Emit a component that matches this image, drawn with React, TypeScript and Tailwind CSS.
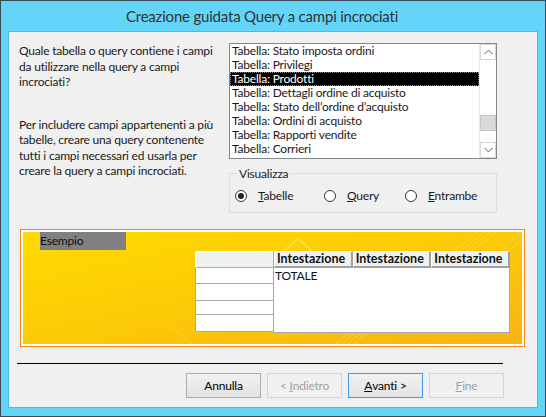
import React from "react";

const TABLES = [
  "Tabella: Stato imposta ordini",
  "Tabella: Privilegi",
  "Tabella: Prodotti",
  "Tabella: Dettagli ordine di acquisto",
  "Tabella: Stato dell\u2019ordine d\u2019acquisto",
  "Tabella: Ordini di acquisto",
  "Tabella: Rapporti vendite",
  "Tabella: Corrieri",
  "Tabella: Fornitori",
];

const SELECTED = 2;

function Chevron({ up }: { up?: boolean }) {
  return (
    <svg width="9" height="6" viewBox="0 0 9 6" className="block">
      <path
        d={up ? "M0.5 5 L4.5 1 L8.5 5" : "M0.5 1 L4.5 5 L8.5 1"}
        fill="none"
        stroke="#606060"
        strokeWidth="1"
      />
    </svg>
  );
}

function Radio({ checked, label, accel }: { checked?: boolean; label: string; accel: string }) {
  return (
    <div className="flex items-center gap-[11px]">
      <div className="w-[12px] h-[12px] rounded-full border border-[#333] bg-white flex items-center justify-center">
        {checked && <div className="w-[6px] h-[6px] rounded-full bg-[#222]" />}
      </div>
      <span>
        <u>{accel}</u>
        {label}
      </span>
    </div>
  );
}

function WizardButton({
  children,
  disabled,
  focused,
}: {
  children: React.ReactNode;
  disabled?: boolean;
  focused?: boolean;
}) {
  const tone = disabled
    ? "border-[#d5d5d5] bg-[#f0f0f0] text-[#a0a0a0]"
    : focused
    ? "border-[#3c9bf0] bg-gradient-to-b from-[#f2f2f2] to-[#e3e3e3] text-black"
    : "border-[#acacac] bg-gradient-to-b from-[#f2f2f2] to-[#e3e3e3] text-black";
  return (
    <div className={`w-[75px] h-[25px] border flex items-center justify-center ${tone}`}>
      {children}
    </div>
  );
}

export default function App() {
  return (
    <div
      className="w-[546px] h-[417px] bg-[#63d5f9] border border-[#3a4b55] flex flex-col text-[12px] tracking-[-0.2px] text-[#1a1a1a]"
      style={{ fontFamily: 'Lato, "Segoe UI", sans-serif' }}
    >
      {/* Title bar */}
      <div className="h-[30px] pr-[22px] flex items-center justify-center text-[15px] text-[#333]">
        Creazione guidata Query a campi incrociati
      </div>

      {/* Client area */}
      <div className="mx-[7px] h-[377px] bg-[#f0f0f0] border border-[#4cbbe4] flex flex-col">
        {/* Top: description + list */}
        <div className="flex pl-[10px] pt-[10px]">
          <div className="w-[210px] pr-[12px] leading-[15.5px] pt-[1px]">
            <p>Quale tabella o query contiene i campi da utilizzare nella query a campi incrociati?</p>
            <p className="mt-[27px]">
              Per includere campi appartenenti a più tabelle, creare una query contenente tutti i
              campi necessari ed usarla per creare la query a campi incrociati.
            </p>
          </div>

          <div className="w-[268px] flex flex-col">
            <div className="mt-[1px] h-[116px] border border-[#828790] bg-white flex overflow-hidden">
              <div className="flex-1 overflow-hidden">
                {TABLES.map((t, i) => (
                  <div
                    key={t}
                    className={`h-[14px] leading-[14px] pl-[2px] whitespace-nowrap ${
                      i === SELECTED ? "bg-black text-white outline outline-1 outline-dotted outline-[#888] -outline-offset-1" : ""
                    }`}
                  >
                    {t}
                  </div>
                ))}
              </div>
              <div className="w-[17px] border-l border-[#e8e8e8] flex flex-col">
                <div className="h-[16px] border border-[#dadada] flex items-center justify-center">
                  <Chevron up />
                </div>
                <div className="h-[55px]" />
                <div className="h-[16px] bg-[#dadada] border border-[#c8c8c8]" />
                <div className="flex-1" />
                <div className="h-[16px] border border-[#dadada] flex items-center justify-center">
                  <Chevron />
                </div>
              </div>
            </div>

            {/* Visualizza group */}
            <div className="mt-[14px] h-[40px] border border-[#dcdcdc] relative flex items-center pl-[5px] pt-[5px]">
              <span className="absolute -top-[9px] left-[7px] bg-[#f0f0f0] px-[2px]">Visualizza</span>
              <div className="w-[89px]">
                <Radio checked accel="T" label="abelle" />
              </div>
              <div className="w-[81px]">
                <Radio accel="Q" label="uery" />
              </div>
              <Radio accel="E" label="ntrambe" />
            </div>
          </div>
        </div>

        {/* Yellow example panel */}
        <div className="ml-[11px] mt-[16px] w-[505px] h-[118px] border border-[#f28a12] p-[1px] bg-white">
          <div className="relative w-full h-full border border-white bg-gradient-to-br from-[#ffdb00] via-[#fcca06] to-[#f8b414] overflow-hidden flex flex-col">
            {/* faint decorations */}
            <svg className="absolute inset-0" width="501" height="114" viewBox="0 0 501 114">
              <path d="M258 22 L275 6 L292 22" fill="none" stroke="#fde36a" strokeWidth="2" opacity="0.7" />
              <g stroke="#fde26a" strokeWidth="1" opacity="0.55">
                <line x1="430" y1="20" x2="455" y2="0" />
                <line x1="436" y1="20" x2="461" y2="0" />
                <line x1="442" y1="20" x2="467" y2="0" />
                <line x1="448" y1="20" x2="473" y2="0" />
                <line x1="478" y1="20" x2="498" y2="0" />
                <line x1="484" y1="20" x2="501" y2="6" />
                <line x1="310" y1="114" x2="334" y2="94" />
                <line x1="316" y1="114" x2="340" y2="94" />
                <line x1="322" y1="114" x2="346" y2="94" />
                <line x1="328" y1="114" x2="352" y2="94" />
                <line x1="150" y1="96" x2="170" y2="114" />
              </g>
            </svg>

            <div className="relative ml-[17px] mt-0 w-[86px] h-[18px] bg-[#808080] text-[#111] leading-[18px]">
              Esempio
            </div>

            <div className="relative ml-[172px] mt-[1px] flex">
              {/* row headers column */}
              <div className="w-[78px] flex flex-col">
                <div className="h-[17px] bg-[#f0f0f0] border-t-2 border-l-2 border-white border-b border-b-[#a9a9a9]" />
                <div className="h-[16px] bg-white border-l border-b border-[#a9a9a9]" />
                <div className="h-[17px] bg-white border-l border-b border-[#a9a9a9]" />
                <div className="h-[14px] bg-white border-l border-b border-[#a9a9a9]" />
                <div className="h-[17px] bg-white border-l border-b border-[#a9a9a9]" />
              </div>
              {/* data area */}
              <div className="w-[237px] flex flex-col border-l border-[#a9a9a9]">
                <div className="h-[17px] flex">
                  {[79, 79, 79].map((w, i) => (
                    <div
                      key={i}
                      className="bg-[#f0f0f0] border-t border-l border-white border-r-2 border-r-[#a0a0a0] border-b-2 border-b-[#a0a0a0] font-bold text-[12.5px] tracking-normal leading-[14px] pl-[2px] overflow-hidden whitespace-nowrap text-[#111]"
                      style={{ width: w }}
                    >
                      Intestazione
                    </div>
                  ))}
                </div>
                <div className="h-[65px] bg-white border-r border-b border-[#a9a9a9] pl-[1px] leading-[15px] text-[#111]">
                  TOTALE
                </div>
              </div>
            </div>
          </div>
        </div>

        {/* Separator */}
        <div className="ml-[8px] mt-[16px] w-[486px] h-px bg-black" />

        {/* Buttons */}
        <div className="mt-[9px] ml-[177px] flex gap-[6px]">
          <WizardButton>Annulla</WizardButton>
          <WizardButton disabled>
            &lt;&nbsp;<u>I</u>ndietro
          </WizardButton>
          <WizardButton focused>
            <u>A</u>vanti &gt;
          </WizardButton>
          <WizardButton disabled>
            <u>F</u>ine
          </WizardButton>
        </div>
      </div>
    </div>
  );
}
